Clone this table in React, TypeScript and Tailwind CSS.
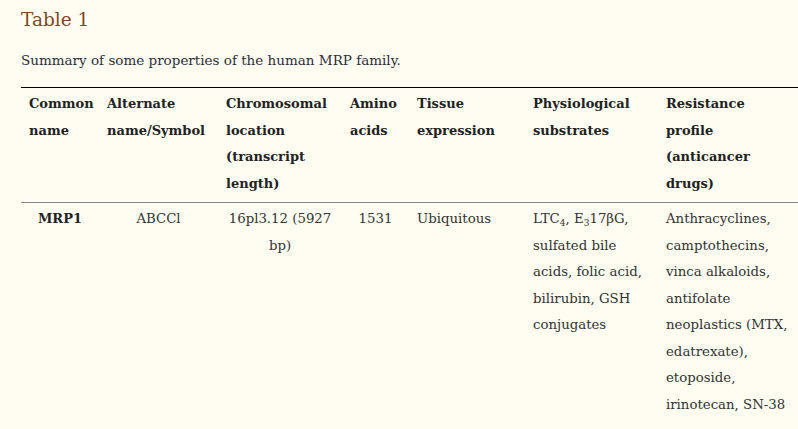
const HEAD = [
  "Common name",
  "Alternate name/Symbol",
  "Chromosomal location (transcript length)",
  "Amino acids",
  "Tissue expression",
  "Physiological substrates",
  "Resistance profile (anticancer drugs)",
];

const WIDTHS = ["w-[78px]", "w-[119px]", "w-[124px]", "w-[67px]", "w-[116px]", "w-[133px]", "w-[140px]"];

export default function App() {
  return (
    <div className="h-[429px] w-[798px] overflow-hidden bg-[#fffdf1] text-[#333] [font-family:'DejaVu_Serif',serif]">
      <div className="pl-[21px] pt-[6px]">
        <h1 className="text-[18.5px] leading-[28px] text-[#7b4a28]">Table 1</h1>
        <p className="mt-[16px] text-[13.5px] leading-[20px] text-[#2d2d3a]">
          Summary of some properties of the human MRP family.
        </p>
        <table className="mt-[17px] w-[777px] table-fixed border-collapse text-[13.3px] leading-[26.5px]">
          <colgroup>
            {WIDTHS.map((w, i) => <col key={i} className={w} />)}
          </colgroup>
          <thead>
            <tr className="border-t border-b border-t-black border-b-[#888]">
              {HEAD.map((h) => (
                <th key={h} className="px-2 pt-[3px] pb-[5px] text-left align-top text-[13px] font-bold text-[#222]">{h}</th>
              ))}
            </tr>
          </thead>
          <tbody>
            <tr className="align-top">
              <td className="px-2 pt-[3px] text-center text-[13px] font-bold text-[#222]">MRP1</td>
              <td className="px-2 pt-[3px] text-center">ABCCl</td>
              <td className="px-2 pt-[3px] text-center">16pl3.12 (5927 bp)</td>
              <td className="px-2 pt-[3px] text-center">1531</td>
              <td className="px-2 pt-[3px]">Ubiquitous</td>
              <td className="px-2 pt-[3px]">
                LTC<span className="relative top-[3px] text-[9px] leading-none">4</span>, E<span className="relative top-[3px] text-[9px] leading-none">3</span>17βG, sulfated bile acids, folic acid, bilirubin, GSH conjugates
              </td>
              <td className="px-2 pt-[3px]">
                Anthracyclines, camptothecins, vinca alkaloids, antifolate neoplastics (MTX, edatrexate), etoposide, irinotecan, SN-38
              </td>
            </tr>
          </tbody>
        </table>
      </div>
    </div>
  );
}
